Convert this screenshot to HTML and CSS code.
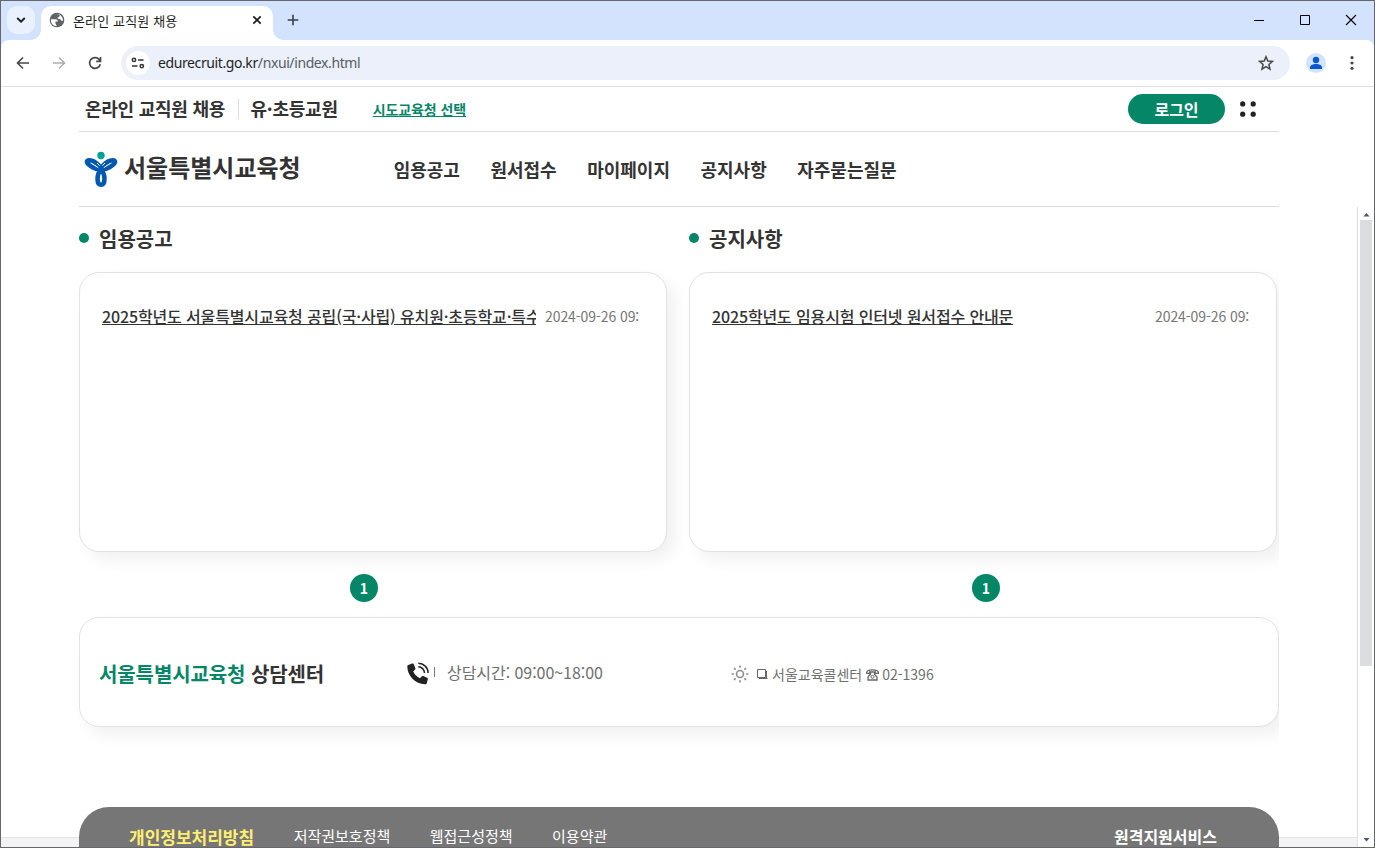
FILE: index.html
```html
<!DOCTYPE html>
<html lang="ko">
<head>
<meta charset="utf-8">
<title>온라인 교직원 채용</title>
<link rel="stylesheet" href="styles.css">
</head>
<body>
<div class="window">
  <div class="tabstrip">
    <div class="tab-search"><svg width="10" height="6" viewBox="0 0 10 6"><path d="M1.2 1 5 4.6 8.8 1" fill="none" stroke="#1f1f1f" stroke-width="1.9"/></svg></div>
    <div class="tab">
      <svg class="globe" width="16" height="16" viewBox="0 0 16 16"><circle cx="8" cy="8" r="7.3" fill="#5f6368"/><path d="M2 7.200h4.300c1.700 0 2.500.9 2.500 2.300H6.500v2.200l1.400 2.400C4 14.200 1.400 11 2 7.200zM7.200 2h3.500v1.500c0 1.200-.8 1.800-2 1.800v1.500l2 .2c1 .2 1.200 1 1.500 1.800h1.800C14.200 5.400 11.500 1.800 7.200 2z" fill="#fff"/></svg>
      <span class="tab-title">온라인 교직원 채용</span>
      <svg class="tab-close" width="10" height="10" viewBox="0 0 10 10"><path d="M1.300 1.300 8.700 8.700M8.700 1.300 1.300 8.700" stroke="#1f1f1f" stroke-width="1.700"/></svg>
    </div>
    <svg class="tab-new" width="12" height="12" viewBox="0 0 12 12"><path d="M6 .7v10.600M.7 6h10.600" stroke="#3c4043" stroke-width="1.600"/></svg>
    <div class="win-controls">
      <svg width="12" height="12" viewBox="0 0 12 12"><path d="M1 6.500h10" stroke="#000"/></svg>
      <svg width="12" height="12" viewBox="0 0 12 12"><path d="M1.500 1.500h9v9h-9z" fill="none" stroke="#000"/></svg>
      <svg width="12" height="12" viewBox="0 0 12 12"><path d="M1 1l10 10M11 1 1 11" stroke="#000" stroke-width="1.100"/></svg>
    </div>
  </div>
  <div class="toolbar">
    <svg width="14" height="14" viewBox="0 0 14 14"><path d="M13 7H1.800M7 1.500 1.500 7 7 12.500" fill="none" stroke="#474747" stroke-width="1.600"/></svg>
    <svg width="14" height="14" viewBox="0 0 14 14"><path d="M1 7h11.200M7 1.500 12.500 7 7 12.500" fill="none" stroke="#adadad" stroke-width="1.500"/></svg>
    <svg width="14" height="14" viewBox="0 0 14 14"><path d="M12.300 8.200A5.400 5.400 0 1 1 11 3.300l1.300 1.500M12.500 1v4.400H8.200" fill="none" stroke="#474747" stroke-width="1.700"/></svg>
    <div class="omnibox">
      <div class="site-info"><svg width="14" height="12" viewBox="0 0 14 12"><g fill="none" stroke="#333" stroke-width="1.500"><circle cx="3" cy="2.900" r="1.700"/><path d="M7 2.900h5.500M1 9.100h5.500"/><circle cx="10.800" cy="9.100" r="1.700"/></g></svg></div>
      <span class="url">edurecruit.go.kr<span class="path">/nxui/index.html</span></span>
      <svg class="star" width="16" height="16" viewBox="0 0 16 16"><path d="M8 1.700 9.800 6l4.700.4-3.600 3.100 1.100 4.600L8 11.700l-4 2.400 1.100-4.600L1.500 6.400 6.200 6z" fill="none" stroke="#474747" stroke-width="1.500"/></svg>
    </div>
    <svg class="profile" width="20" height="20" viewBox="0 0 20 20"><circle cx="10" cy="10" r="10" fill="#d3e3fd"/><circle cx="10" cy="7" r="3.200" fill="#0b57d0"/><path d="M4 16v-1.700c0-2.200 3.300-3.400 6-3.400s6 1.200 6 3.400V16z" fill="#0b57d0"/></svg>
    <svg class="kebab" width="4" height="14" viewBox="0 0 4 14"><g fill="#474747"><circle cx="2" cy="1.700" r="1.600"/><circle cx="2" cy="7" r="1.600"/><circle cx="2" cy="12.300" r="1.600"/></g></svg>
  </div>

  <div class="topbar">
    <span class="service">온라인 교직원 채용</span>
    <span class="kind">유·초등교원</span>
    <a class="region">시도교육청 선택</a>
    <button class="login">로그인</button>
    <svg width="16" height="16" viewBox="0 0 16 16"><g fill="#222"><circle cx="2.700" cy="2.900" r="2.600"/><circle cx="13.200" cy="2.900" r="2.600"/><circle cx="2.700" cy="13.200" r="2.600"/><circle cx="13.200" cy="13.200" r="2.600"/></g></svg>
  </div>
  <div class="header">
    <svg class="emblem" width="34" height="36" viewBox="0 0 34 36">
      <circle cx="17" cy="4.500" r="3.700" fill="#00a199"/>
      <g fill="none" stroke="#0058b0" stroke-width="4.600">
        <path d="M16.500 18.800C12 18.800 4 14.500 3 11.200 2.500 8.500 7 8.800 10 10.500c3.500 2 6 5 7 8.300"/>
        <path d="M17.500 18.800c4.500 0 12.500-4.300 13.500-7.600.5-2.700-4-2.400-7-.7-3.500 2-6 5-7 8.300"/>
        <path d="M17 18.500c-4.600 5-4.600 15.200 0 15.200s4.600-10.200 0-15.200z"/>
      </g>
      <path d="m11 14.500 3.200 2.200M13 12l2.500 2.600M23 14.500l-3.200 2.200M21 12l-2.500 2.600" stroke="#fff" stroke-width="1"/>
    </svg>
    <span class="org">서울특별시교육청</span>
    <nav class="nav"><a>임용공고</a><a>원서접수</a><a>마이페이지</a><a>공지사항</a><a>자주묻는질문</a></nav>
  </div>

  <div class="viewport">
    <main class="main">
      <div class="boards">
        <section class="board">
          <h2>임용공고</h2>
          <div class="card"><div class="row"><a class="subject">2025학년도 서울특별시교육청 공립(국·사립) 유치원·초등학교·특수</a><span class="date">2024-09-26 09:</span></div></div>
          <div class="pager pager-left"><span>1</span></div>
        </section>
        <section class="board">
          <h2>공지사항</h2>
          <div class="card"><div class="row"><a class="subject">2025학년도 임용시험 인터넷 원서접수 안내문</a><span class="date">2024-09-26 09:</span></div></div>
          <div class="pager pager-right"><span>1</span></div>
        </section>
      </div>
      <section class="contact">
        <h3><em>서울특별시교육청</em> 상담센터</h3>
        <svg class="phone" width="23" height="23" viewBox="0 0 23 23"><path d="M1.200 3 5.200 1.500c.8-.3 1.300 0 1.600.8l1.600 4c.2.600 0 1.100-.5 1.500L6.200 9.400c1.400 3 3.800 5.400 6.800 6.900l1.700-1.900c.5-.5 1-.6 1.600-.4l3.800 1.700c.7.300.9.800.7 1.500l-1 4c-.2.700-.7 1-1.500 1C8.300 22.300.2 13.800.3 4.300c0-.7.3-1 .9-1.300z" fill="#222"/><g fill="none" stroke="#222" stroke-width="1.500"><path d="M11.300 1.300c5.400 0 9.800 4.300 9.800 9.700M11.300 4.800c3.400 0 6.200 2.800 6.200 6.200"/></g></svg>
        <i class="bar"></i>
        <span class="hours">상담시간: 09:00~18:00</span>
        <svg class="sun" width="18" height="18" viewBox="0 0 18 18"><g fill="none" stroke="#8c8c8c" stroke-width="1.600"><circle cx="9" cy="9" r="3.500"/><path d="M9 .5v2.300M9 15.200v2.300M.5 9h2.300M15.200 9h2.300M3 3l1.600 1.600M13.400 13.400 15 15M15 3l-1.600 1.600M4.600 13.400 3 15"/></g></svg>
        <svg class="box" width="11" height="11" viewBox="0 0 11 11"><path d="M.5.500h8v8h-8zM2 9.500h8.500M9.500 2v8" fill="none" stroke="#666"/></svg>
        <span class="call">서울교육콜센터</span>
        <svg class="tel" width="13" height="12" viewBox="0 0 13 12"><path d="M.6 4.300C.4 2 2.300.9 6.500.9s6.100 1.100 5.900 3.400H9.300V3H3.700v1.300zM4.500 3.200v2L2 8v3h9V8L8.500 5.200v-2" fill="none" stroke="#666" stroke-width="1.300"/><circle cx="6.500" cy="7.800" r="1.500" fill="none" stroke="#666"/></svg>
        <span class="number">02-1396</span>
      </section>
      <footer class="footer">
        <a class="privacy">개인정보처리방침</a><a>저작권보호정책</a><a>웹접근성정책</a><a>이용약관</a><a class="remote">원격지원서비스</a>
      </footer>
    </main>
    <div class="scrollbar">
      <svg width="7" height="4" viewBox="0 0 7 4"><path d="M3.500 0 6.500 3.500h-6z" fill="#505070"/></svg>
      <div class="thumb"></div>
      <svg class="down" width="7" height="4" viewBox="0 0 7 4"><path d="M.5 0h6l-3 3.500z" fill="#505070"/></svg>
    </div>
  </div>
</div>
</body>
</html>
```
FILE: styles.css
```css
* { box-sizing: border-box; }
body { margin: 0; overflow: hidden; font-family: "Noto Sans CJK KR", sans-serif; color: #333; background: #fff; }
svg { display: block; flex: none; }
h2, h3 { margin: 0; }
.window { width: 1375px; height: 848px; border: 1px solid #66676c; display: flex; flex-direction: column; overflow: hidden; white-space: nowrap; background: #d3e3fd; }

.tabstrip { height: 39px; flex: none; display: flex; align-items: center; padding: 0 0 1px 6px; position: relative; z-index: 1; }
.tab-search { width: 28px; height: 28px; border-radius: 10px; background: #e9f1fe; display: flex; align-items: center; justify-content: center; }
.tab { width: 232px; height: 34px; margin: 6px 0 0 6px; padding: 0 11px 6px 8px; background: #fff; border-radius: 10px 10px 0 0; display: flex; align-items: center; position: relative; }
.tab::before, .tab::after { content: ""; position: absolute; bottom: 0; width: 10px; height: 10px; }
.tab::before { left: -10px; background: radial-gradient(circle at 0 0, transparent 9.5px, #fff 10px); }
.tab::after { right: -10px; background: radial-gradient(circle at 100% 0, transparent 9.5px, #fff 10px); }
.tab-title { margin-left: 8px; padding-top: 1px; font-size: 13px; line-height: 18px; letter-spacing: .15px; color: #1f1f1f; flex: 1; }
.tab-new { margin-left: 14px; }
.win-controls { margin-left: auto; padding-right: 17px; display: flex; gap: 34px; }

.toolbar { height: 47px; flex: none; border-bottom: 1px solid #dfe1e5; background: #fff; border-radius: 8px 8px 0 0; display: flex; align-items: center; padding: 0 20px 0 15px; gap: 22px; }
.omnibox { width: 1169px; height: 34px; margin-left: -3px; border-radius: 17px; background: #ebf0fa; display: flex; align-items: center; padding: 0 16px 0 5px; }
.site-info { width: 24px; height: 24px; border-radius: 50%; background: #fff; display: flex; align-items: center; justify-content: center; }
.url { margin-left: 8px; font: 14px/20px "Noto Sans", "Open Sans", sans-serif; letter-spacing: -.4px; color: #1f1f1f; }
.url .path { color: #5a5d61; }
.star { margin-left: auto; }
.profile { margin-left: -6px; }
.kebab { margin-left: 2px; }

.topbar { width: 100%; height: 45px; flex: none; border: solid #fff; border-width: 0 95px 0 78px; background: linear-gradient(#ddd, #ddd) 0 100% / 100% 1px no-repeat #fff; display: flex; align-items: center; padding: 0 23px 1px 6px; font-size: 18px; line-height: 26px; font-weight: 700; letter-spacing: -.25px; }
.service { margin-top: -2px; }
.kind { margin: -2px 0 0 12.500px; position: relative; padding-left: 13px; }
.kind::before { content: ""; position: absolute; left: 0; top: 4px; width: 1px; height: 20px; background: #ddd; }
.region { margin-left: 35px; font-size: 14px; letter-spacing: -.1px; color: #048667; text-decoration: underline; }
.login { margin-left: auto; margin-right: 15px; width: 97px; height: 30px; border: 0; border-radius: 15px; background: #048667; color: #fff; font: 700 16px/28px "Noto Sans CJK KR", sans-serif; padding: 0; }

.header { width: 100%; height: 75px; flex: none; border: solid #fff; border-width: 0 95px 0 78px; background: linear-gradient(#ddd, #ddd) 0 100% / 100% 1px no-repeat #fff; display: flex; align-items: center; padding: 0 0 1px 5px; }
.org { margin-left: 6px; font-size: 24px; line-height: 34px; font-weight: 700; padding-bottom: 5px; }
.nav { display: flex; gap: 30.500px; margin-left: 93px; font-size: 18px; line-height: 26px; font-weight: 700; }

.viewport { flex: 1; min-height: 0; display: flex; justify-content: space-between; background: linear-gradient(#e4e4e4 1px, #f3f3f3 1px) 0 100% / 100% 10px no-repeat #fff; }
.main { width: 1278px; padding-left: 78px; overflow: hidden; }
.boards { display: flex; gap: 22px; }
.board { width: 588px; }
.board h2 { height: 65px; display: flex; align-items: center; gap: 10px; padding-bottom: 2px; font-size: 20px; line-height: 29px; font-weight: 700; }
.board h2::before { content: ""; width: 10px; height: 10px; border-radius: 50%; background: #048667; margin-top: -1px; }
.card { height: 280px; border: 1px solid #e2e2e2; border-radius: 20px; background: #fff; box-shadow: 8px 8px 16px rgba(0, 0, 0, .06); padding: 30px 27px 0 22px; }
.row { display: flex; align-items: center; }
.subject { width: 434px; flex: none; overflow: hidden; font-size: 16px; line-height: 26px; letter-spacing: -.14px; font-weight: 500; text-decoration: underline; }
.date { margin-left: 9px; font-size: 14px; line-height: 26px; letter-spacing: -.08px; color: #777; }
.pager { display: flex; justify-content: center; padding-top: 22px; }
.pager span { width: 28px; height: 28px; border-radius: 50%; background: #048667; color: #fff; font-size: 14px; line-height: 28px; font-weight: 700; text-align: center; }
.pager-left { padding-right: 18px; }
.pager-right { padding-left: 6px; }

.contact { height: 110px; margin-top: 15px; border: 1px solid #e2e2e2; border-radius: 20px; box-shadow: 8px 8px 16px rgba(0, 0, 0, .06); display: flex; align-items: center; padding: 4px 0 0 19px; color: #707070; font-size: 14px; line-height: 22px; background: #fff; }
.contact h3 { width: 225px; margin-top: -2px; font-size: 20px; line-height: 29px; font-weight: 700; letter-spacing: -.1px; color: #333; }
.contact em { font-style: normal; color: #048667; }
.phone { margin-left: 83px; margin-top: -2px; }
.bar { width: 1px; height: 10px; margin: -4px 12px 0 4px; background: #777; }
.hours { font-size: 16px; width: 157px; margin-top: -4px; letter-spacing: -.05px; }
.sun { margin-left: 127px; }
.box { margin-left: 8px; }
.call { margin-left: 4px; }
.tel { margin: 2px 3px 0 4px; }

.footer { height: 80px; margin-top: 80px; border-radius: 30px; background: #767676; color: #fff; display: flex; gap: 39.500px; padding: 18px 62px 0 50px; font-size: 15px; line-height: 22px; }
.privacy { font-size: 17px; line-height: 24px; font-weight: 700; color: #ffee70; }
.remote { margin-left: auto; font-size: 16px; font-weight: 700; }

.scrollbar { width: 17px; border-left: 1px solid #e0e0e0; background: #fff; display: flex; flex-direction: column; align-items: center; padding: 6px 1px 5px 1px; }
.thumb { width: 12px; height: 446px; margin-top: 3px; background: #dcdde1; }
.down { margin-top: auto; }
```
